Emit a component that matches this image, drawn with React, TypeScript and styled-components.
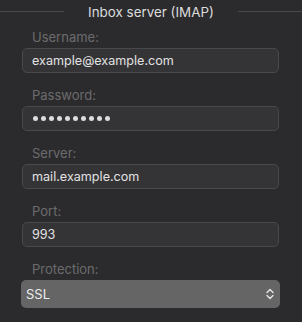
import React from "react";
import styled, { createGlobalStyle } from "styled-components";

const Global = createGlobalStyle`
  html, body { margin: 0; padding: 0; background: #2b2b2d; }
  body { font-family: Inter, "Open Sans", sans-serif; -webkit-font-smoothing: antialiased; }
`;

const Page = styled.div`
  width: 302px;
  height: 322px;
  background: #2b2b2d;
  overflow: hidden;
`;

const Header = styled.div`
  display: flex;
  align-items: center;
  height: 24px;
  gap: 24px;
`;

const Rule = styled.div`
  flex: 1;
  height: 1px;
  background: #4a4a4c;
  margin-top: -1px;
`;

const Title = styled.div`
  font-size: 13.4px;
  color: #dcdcdd;
  margin-top: -1px;
`;

const Form = styled.div`
  display: flex;
  flex-direction: column;
  gap: 9px;
  padding-left: 22px;
  width: 257px;
`;

const Field = styled.div`
  display: flex;
  flex-direction: column;
`;

const Label = styled.div`
  height: 24px;
  box-sizing: border-box;
  padding: 5px 0 0 10px;
  font-size: 13px;
  line-height: 16px;
  color: #6b6b6e;
`;

const Input = styled.div`
  height: 25px;
  box-sizing: border-box;
  border: 1px solid #49494b;
  border-radius: 5px;
  background: #343436;
  padding: 0 9px;
  display: flex;
  align-items: center;
  font-size: 12.6px;
  color: #e2e2e3;
`;

const Dots = styled.div`
  display: flex;
  gap: 3px;
  padding-left: 1px;
`;

const Dot = styled.span`
  width: 5px;
  height: 5px;
  border-radius: 50%;
  background: #dadcdd;
`;

const Select = styled.div`
  margin: 0 -1px;
  height: 28px;
  border-radius: 5px;
  background: #656565;
  display: flex;
  align-items: center;
  justify-content: space-between;
  padding: 0 5px 0 5px;
  font-size: 13px;
  color: #ececec;
`;

const Chevrons = () => (
  <svg width="10" height="12" viewBox="0 0 10 12" fill="none" stroke="#e6e6e6" strokeWidth="1.4" strokeLinecap="round" strokeLinejoin="round">
    <path d="M2 4.5 L5 1.5 L8 4.5" />
    <path d="M2 7.5 L5 10.5 L8 7.5" />
  </svg>
);

export default function App() {
  return (
    <Page>
      <Global />
      <Header>
        <Rule />
        <Title>Inbox server (IMAP)</Title>
        <Rule />
      </Header>
      <Form>
        <Field>
          <Label>Username:</Label>
          <Input>example@example.com</Input>
        </Field>
        <Field>
          <Label>Password:</Label>
          <Input>
            <Dots aria-label="password">
              {Array.from({ length: 10 }).map((_, i) => (
                <Dot key={i} />
              ))}
            </Dots>
          </Input>
        </Field>
        <Field>
          <Label>Server:</Label>
          <Input>mail.example.com</Input>
        </Field>
        <Field>
          <Label>Port:</Label>
          <Input>993</Input>
        </Field>
        <Field>
          <Label>Protection:</Label>
          <Select>
            <span>SSL</span>
            <Chevrons />
          </Select>
        </Field>
      </Form>
    </Page>
  );
}
